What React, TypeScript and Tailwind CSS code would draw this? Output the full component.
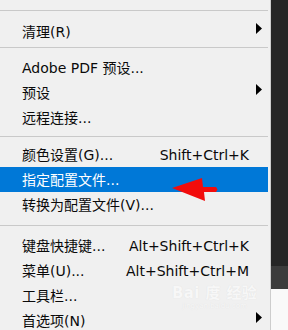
import React from 'react';

type Item = {
  label: string;
  shortcut?: string;
  submenu?: boolean;
  active?: boolean;
};

const sections: { pt: string; pb: string; items: Item[] }[] = [
  { pt: 'pt-[8px]', pb: 'pb-[3px]', items: [{ label: '清理(R)', submenu: true }] },
  {
    pt: 'pt-[7px]',
    pb: 'pb-[6px]',
    items: [
      { label: 'Adobe PDF 预设...' },
      { label: '预设', submenu: true },
      { label: '远程连接...' },
    ],
  },
  {
    pt: 'pt-[5px]',
    pb: 'pb-[8px]',
    items: [
      { label: '颜色设置(G)...', shortcut: 'Shift+Ctrl+K' },
      { label: '指定配置文件...', active: true },
      { label: '转换为配置文件(V)...' },
    ],
  },
  {
    pt: 'pt-[7px]',
    pb: 'pb-0',
    items: [
      { label: '键盘快捷键...', shortcut: 'Alt+Shift+Ctrl+K' },
      { label: '菜单(U)...', shortcut: 'Alt+Shift+Ctrl+M' },
      { label: '工具栏...' },
      { label: '首选项(N)', submenu: true },
    ],
  },
];

const Separator = () => <div className="h-px mr-[2px] bg-[#c9c9c9]" />;

const MenuRow: React.FC<{ item: Item }> = ({ item }) => (
  <div
    className={`relative h-[25px] mr-[2px] flex items-center pl-[22px] ${
      item.active ? 'bg-[#0078d7] text-white' : 'text-[#0a0a0a]'
    }`}
  >
    <span className="flex-1 whitespace-nowrap">{item.label}</span>
    {item.shortcut && <span className="whitespace-nowrap">{item.shortcut}</span>}
    <div className="w-[19px] pl-[7px] flex items-center">
      {item.submenu && (
        <svg width="6" height="11" viewBox="0 0 6 11" className="mb-[7px]">
          <polygon points="0,0 6,5.5 0,11" fill="#000" />
        </svg>
      )}
    </div>

    {/* red annotation arrow */}
    {item.active && (
      <svg
        className="absolute left-[170px] top-[10px] overflow-visible"
        width="50"
        height="25"
        viewBox="0 0 50 25"
      >
        <polygon
          points="2,11 32,1 33,10 46,10 47.5,12.5 46,15 34,15 35,24"
          fill="#f20c0c"
        />
      </svg>
    )}
  </div>
);

export default function App() {
  return (
    <div
      className="flex w-[288px] h-[330px] overflow-hidden text-[14px] leading-none"
      style={{ fontFamily: '"DejaVu Sans", "Noto Sans CJK SC", sans-serif' }}
    >
      <div className="relative w-[271px] bg-[#f0f0f0] border-r border-[#cdcdcd] pt-[10px]">
        {sections.map((s, i) => (
          <div key={i}>
            <Separator />
            <div className={`${s.pt} ${s.pb}`}>
              {s.items.map((item) => (
                <MenuRow key={item.label} item={item} />
              ))}
            </div>
          </div>
        ))}

        {/* watermark */}
        <div className="absolute left-[172px] top-[286px] flex flex-col items-center text-[#f7f7f7] [text-shadow:0_0_1px_#dedede] pointer-events-none">
          <span className="text-[15px] font-bold tracking-wide">Bai 度 经验</span>
          <span className="text-[7px] mt-[2px]">jingyan.baidu.com</span>
        </div>
      </div>

      <div className="flex-1 flex flex-col">
        <div className="h-[266px] bg-[#262626]" />
        <div className="h-[23px] bg-[#3c3c3c]" />
        <div className="flex-1 bg-[#f9f9f9]" />
      </div>
    </div>
  );
}
